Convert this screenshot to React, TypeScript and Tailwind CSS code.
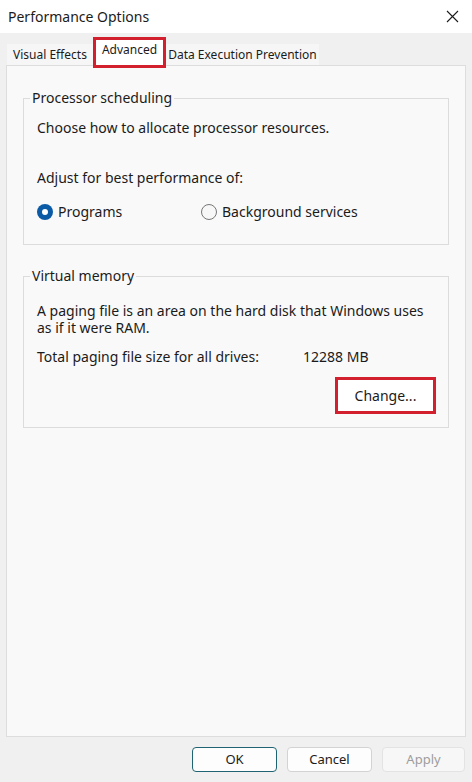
export default function App() {
  const font = { fontFamily: '"Segoe UI", "Noto Sans", sans-serif' };
  return (
    <div
      className="w-[472px] h-[782px] bg-[#f0f0f0] flex flex-col text-[#1b1b1b] overflow-hidden"
      style={font}
    >
      {/* title bar */}
      <div className="h-[33px] bg-white flex items-center justify-between pl-[8px] pr-[13px] shrink-0">
        <span className="text-[14px]">Performance Options</span>
        <svg width="13" height="13" viewBox="0 0 13 13" className="text-[#1b1b1b]">
          <path d="M1 1 L12 12 M12 1 L1 12" stroke="currentColor" strokeWidth="1.1" fill="none" />
        </svg>
      </div>

      {/* tabs */}
      <div className="flex items-end h-[32px] pl-[7px] shrink-0">
        <div className="h-[21px] px-[6px] flex items-center bg-[#f6f6f6] text-[12px]">
          Visual Effects
        </div>
        <div className="h-[31px] -mb-[3px] border-[3px] border-[#d3202f] bg-white px-[6px] flex items-start pt-[1px] text-[12px] relative z-10">
          Advanced
        </div>
        <div className="h-[21px] px-[2px] flex items-center bg-[#f6f6f6] text-[12px]">
          Data Execution Prevention
        </div>
      </div>

      {/* tab page */}
      <div className="mx-[6px] h-[672px] border border-[#dddddd] bg-[#f9f9f9] px-[16px] pt-[22px] shrink-0 text-[14px]">
        <fieldset className="border border-[#dcdcdc] h-[157px] px-[13px]">
          <legend className="-ml-[7px] px-[2px] leading-[20px]">Processor scheduling</legend>
          <div className="mt-[10px] leading-[20px]">Choose how to allocate processor resources.</div>
          <div className="mt-[30px] leading-[20px]">Adjust for best performance of:</div>
          <div className="mt-[14px] flex items-center leading-[20px]">
            <div className="flex items-center w-[164px]">
              <span className="w-[16px] h-[16px] rounded-full bg-[#0b5aa6] flex items-center justify-center">
                <span className="w-[6px] h-[6px] rounded-full bg-white" />
              </span>
              <span className="ml-[5px]">Programs</span>
            </div>
            <div className="flex items-center">
              <span className="w-[16px] h-[16px] rounded-full border border-[#767676] bg-[#f7f7f7]" />
              <span className="ml-[5px]">Background services</span>
            </div>
          </div>
        </fieldset>

        <fieldset className="mt-[21px] border border-[#dcdcdc] h-[162px] px-[13px]">
          <legend className="-ml-[7px] px-[2px] leading-[20px]">Virtual memory</legend>
          <div className="mt-[16px]">
            <div className="h-[17px] leading-[17px]">
              A paging file is an area on the hard disk that Windows uses
            </div>
            <div className="h-[17px] leading-[17px]">as if it were RAM.</div>
          </div>
          <div className="mt-[11px] flex leading-[20px]">
            <span className="w-[266px]">Total paging file size for all drives:</span>
            <span>12288 MB</span>
          </div>
          <div className="mt-[10px] flex justify-end -mr-[1px]">
            <div className="w-[101px] h-[37px] border-[3px] border-[#d3202f] bg-white flex items-center justify-center text-[14px]">
              Change...
            </div>
          </div>
        </fieldset>
      </div>

      {/* bottom buttons */}
      <div className="flex justify-end gap-[10px] pr-[7px] pt-[10px] text-[13px]">
        <button className="w-[85px] h-[25px] rounded-[4px] border border-[#1f6473] bg-[#fdfdfd] flex items-center justify-center">
          OK
        </button>
        <button className="w-[85px] h-[25px] rounded-[4px] border border-[#d3d3d3] bg-[#fdfdfd] flex items-center justify-center">
          Cancel
        </button>
        <button className="w-[83px] h-[25px] rounded-[4px] border border-[#e3e3e3] bg-[#f7f7f7] text-[#9d9d9d] flex items-center justify-center">
          Apply
        </button>
      </div>
    </div>
  );
}
